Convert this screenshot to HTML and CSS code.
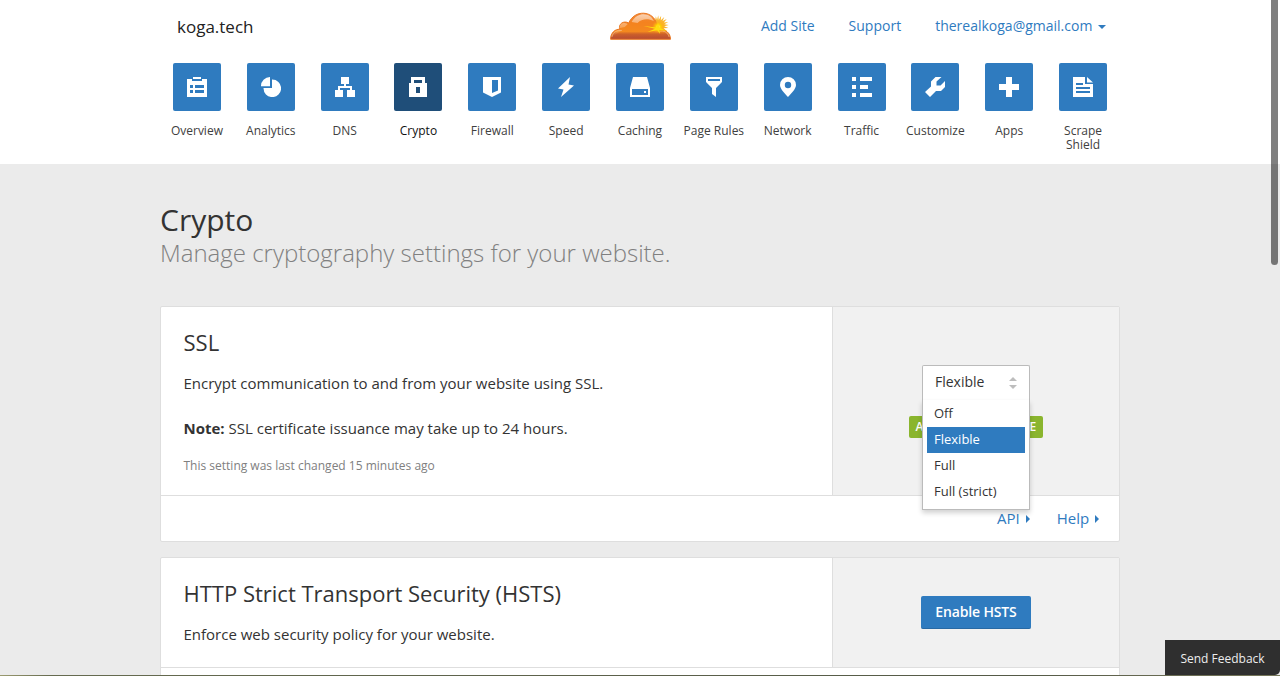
FILE: index.html
```html
<!DOCTYPE html>
<html lang="en">
<head>
<meta charset="utf-8">
<title>Crypto | koga.tech</title>
<link rel="stylesheet" href="styles.css">
</head>
<body>
<div class="window">
  <header class="header">
    <div class="topbar">
      <div class="site">koga.tech</div>
      <svg class="logo" viewBox="0 0 62 29" width="61" height="29">
        <defs>
          <linearGradient id="cloud" x1="0" y1="0" x2="0" y2="1">
            <stop offset="0" stop-color="#f28a3a"/><stop offset=".35" stop-color="#f4821f"/><stop offset=".7" stop-color="#f4891f"/><stop offset=".8" stop-color="#cc602a"/><stop offset="1" stop-color="#b54a33"/>
          </linearGradient>
          <linearGradient id="shine" x1="0" y1="0" x2="0" y2="1">
            <stop offset="0" stop-color="#fff" stop-opacity=".6"/><stop offset="1" stop-color="#fff" stop-opacity="0"/>
          </linearGradient>
          <radialGradient id="glow"><stop offset="0" stop-color="#fff36a"/><stop offset=".4" stop-color="#ffd000"/><stop offset="1" stop-color="#fa9e1c" stop-opacity="0"/></radialGradient>
        </defs>
        <path fill="#fbb52b" d="M46 8l.6-4 1.200 3.800 1.200-4.800.6 4.800 2.400-4.200-.4 4.600 3.600-3.400-1.800 4.200 4.300-2-3 3.500 4.500-.6-4 2.400 4.500.8-4.600 1.200 4.200 1.700-4.800.3 3.500 3H44z"/>
        <path fill="url(#cloud)" stroke="#ea7620" stroke-width="1" d="M.6 27.500C.6 21 5 17 10 17.300C8 12 14 8 19 11C22 4 28 .8 34 1C41 1.200 46 6 47 11L50 18.500C56 16.500 61.500 21 61.500 27.500Z"/>
        <path fill="url(#shine)" d="M22 10C25 4 30 2 34 2C40 2 43 5 44.500 9C38 6 32 7 28 11ZM10 16C9 12 14 9.500 18 12L15 15ZM2 25C3 20 7 18 12 18.500L8 21Z"/>
        <path fill="none" stroke="#f9bd80" stroke-width=".8" d="M2 25C3 20 7 18 12 18.500M50 19.500C55 18 59 21 60 25"/>
        <circle cx="49" cy="15" r="6.500" fill="url(#glow)"/>
        <path fill="#ffdc10" d="M34 14L47 15.500 49 11 50 15.500 58 19 50 18 51 22 48 18.200 38 20 46 16.800Z"/>
      </svg>
      <nav class="account">
        <a>Add Site</a><a>Support</a><a>therealkoga@gmail.com <i class="caret"></i></a>
      </nav>
    </div>
    <nav class="apps">
      <a class="app"><span class="tile"><svg viewBox="0 0 20 20"><path fill-rule="evenodd" d="M0 2h5v2h10V2h5v18H0zM6 0h8v2H6zM3 8v3h3V8zM8 8v3h9V8zM3 13v3h3v-3zM8 13v3h9v-3z"/></svg></span>Overview</a>
      <a class="app"><span class="tile"><svg viewBox="0 0 20 20"><path d="M0 9.200A9 9 0 0 1 9 0V9.200zM11 2.500A8.800 8.800 0 1 1 2.500 11H11z"/></svg></span>Analytics</a>
      <a class="app"><span class="tile"><svg viewBox="0 0 20 20"><path d="M6 0h8v7h-3v2h6v4h3v7h-8v-7h3v-2H5v2h3v7H0v-7h3V9h6V7H6z"/></svg></span>DNS</a>
      <a class="app active"><span class="tile"><svg viewBox="0 0 20 20"><path fill-rule="evenodd" d="M3 0h14v6h2v14H1V6h2zM6 3v3h8V3zM8 10v6h4v-6z"/></svg></span>Crypto</a>
      <a class="app"><span class="tile"><svg viewBox="0 0 20 20"><path fill-rule="evenodd" d="M1 0h18v15.500L10 20l-9-4.500zM10 3v13l6-2.500V3z"/></svg></span>Firewall</a>
      <a class="app"><span class="tile"><svg viewBox="0 0 20 20"><path d="M14 0L2 11.500l5.500 1L5 20 18 8.500l-5.500-1z"/></svg></span>Speed</a>
      <a class="app"><span class="tile"><svg viewBox="0 0 20 20"><path fill-rule="evenodd" d="M3 0h14l3 11v9H0v-9zM2 12v6h16v-6zM14 14h2v2h-2z"/></svg></span>Caching</a>
      <a class="app"><span class="tile"><svg viewBox="0 0 20 20"><path fill-rule="evenodd" d="M2 0h16v5l-6 6v9l-4-3v-6L2 5zM4 2v2h12V2z"/></svg></span>Page Rules</a>
      <a class="app"><span class="tile"><svg viewBox="0 0 20 20"><path fill-rule="evenodd" d="M10 20C7 16.500 2 12 2 8a8 8 0 0 1 16 0c0 4-5 8.500-8 12zM10 4.800a3.200 3.200 0 1 0 0 6.400 3.200 3.200 0 0 0 0-6.400z"/></svg></span>Network</a>
      <a class="app"><span class="tile"><svg viewBox="0 0 20 20"><path d="M0 0h4v4H0zM8 0h12v4H8zM0 8h4v4H0zM8 8h8v4H8zM0 16h4v4H0zM8 16h12v4H8z"/></svg></span>Traffic</a>
      <a class="app"><span class="tile"><svg viewBox="0 0 20 20"><path d="M16.500 0L11.500 4.500v4h4L20 4v6l-4 4h-5l-6 6L0 15l6-5.500V4.500L10.500 0z"/></svg></span>Customize</a>
      <a class="app"><span class="tile"><svg viewBox="0 0 20 20"><path d="M7 0h6v7h7v6h-7v7H7v-7H0V7h7z"/></svg></span>Apps</a>
      <a class="app"><span class="tile"><svg viewBox="0 0 20 20"><path fill-rule="evenodd" d="M0 0h12v7h8v13H0zM14 0l6 5.500h-6zM3 6v2h7V6zM3 10v2h14v-2zM3 14v2h14v-2z"/></svg></span>Scrape<br>Shield</a>
    </nav>
  </header>

  <main class="content">
    <h1>Crypto</h1>
    <p class="lead">Manage cryptography settings for your website.</p>

    <section class="card">
      <div class="card-body ssl">
        <div class="card-main">
          <h2>SSL</h2>
          <p>Encrypt communication to and from your website using SSL.</p>
          <p class="note"><b>Note:</b> SSL certificate issuance may take up to 24 hours.</p>
          <small>This setting was last changed 15 minutes ago</small>
        </div>
        <div class="card-side">
          <div class="select">
            <span>Flexible</span>
            <svg viewBox="0 0 8 12" width="8" height="12"><path d="M4 0l4 4H0zM0 8h8l-4 4z"/></svg>
            <ul class="menu"><li>Off</li><li class="selected">Flexible</li><li>Full</li><li>Full (strict)</li></ul>
          </div>
          <span class="badge">ACTIVE CERTIFICATE</span>
        </div>
      </div>
      <footer class="card-footer"><a>API <i class="arrow"></i></a><a>Help <i class="arrow"></i></a></footer>
    </section>

    <section class="card">
      <div class="card-body hsts">
        <div class="card-main">
          <h2>HTTP Strict Transport Security (HSTS)</h2>
          <p>Enforce web security policy for your website.</p>
        </div>
        <div class="card-side"><button class="button">Enable HSTS</button></div>
      </div>
      <footer class="card-footer"></footer>
    </section>
  </main>

  <div class="feedback">Send Feedback</div>
  <div class="scrollbar"></div>
  <div class="edge"></div>
</div>
</body>
</html>
```
FILE: styles.css
```css
* { box-sizing: border-box; }
body { margin: 0; font-family: "Open Sans", sans-serif; font-size: 15px; line-height: 22.5px; color: #333; }
h1, h2, p, ul { margin: 0; padding: 0; font-weight: 400; }
.window { position: relative; width: 1280px; height: 676px; overflow: hidden; background: #ebebeb; }

.header { height: 164px; background: #fff; }
.topbar { width: 960px; height: 63px; margin: 0 auto; padding: 12px 14px 0 17px; display: grid; grid-template-columns: 433px 61px 1fr; align-items: start; }
.site { font-size: 17px; line-height: 29px; color: #222; }
.logo { display: block; }
.account { display: flex; justify-content: flex-end; gap: 34px; font-size: 14px; line-height: 28px; color: #2f7bbf; }
.caret { display: inline-block; margin-left: 2px; vertical-align: 2px; border: 4px solid transparent; border-top-color: #2f7bbf; border-bottom: 0; }
.apps { width: 960px; margin: 0 auto; display: grid; grid-template-columns: repeat(13, minmax(0, 1fr)); }
.app { display: flex; flex-direction: column; align-items: center; font-size: 12px; line-height: 14px; text-align: center; color: #404040; white-space: nowrap; }
.tile { width: 48px; height: 48px; margin-bottom: 13px; padding: 14px; border-radius: 2px; background: #2f7bbf; }
.tile svg { display: block; width: 20px; height: 20px; fill: #fff; }
.active { color: #111; }
.active .tile { background: #1f4e79; }

.content { width: 960px; margin: 0 auto; padding-top: 37px; }
h1 { font-size: 30px; line-height: 38px; }
.lead { font-size: 24px; line-height: 28px; font-weight: 300; color: #808080; }
.card { margin-top: 39px; border: 1px solid #dedede; border-radius: 2px; background: #fff; }
.card + .card { margin-top: 15px; }
.card-body { display: grid; grid-template-columns: 671px 1fr; border-bottom: 1px solid #dedede; }
.ssl { height: 189px; }
.hsts { height: 110px; }
.card-main { padding: 20px 22.5px 0; }
.card-main h2 { font-size: 22px; line-height: 30px; margin-bottom: 14.5px; }
.note { margin: 22.5px 0 16px; }
.card-main small { display: block; font-size: 12px; line-height: 22px; color: #808080; }
.card-side { display: flex; flex-direction: column; align-items: center; justify-content: center; border-left: 1px solid #dedede; background: #f1f1f1; }
.ssl .card-side { justify-content: flex-start; padding-top: 58px; }
.select { position: relative; width: 108px; height: 35px; display: flex; justify-content: space-between; padding: 0 12px; border: 1px solid #bbb; border-bottom: 0; border-radius: 2px 2px 0 0; background: #fff; font-size: 14px; line-height: 32px; }
.select svg { margin-top: 11px; fill: #bdbdbd; }
.menu { position: absolute; top: 34px; left: -1px; width: 108px; height: 110px; padding: 1px 4px 0; list-style: none; border: 1px solid #bbb; border-top: 0; background: #fff; box-shadow: 0 3px 5px rgba(0, 0, 0, .18); font-size: 13px; line-height: 24px; }
.menu li { height: 26px; padding: 0 7px; }
.menu .selected { background: #2f7bbf; color: #fff; }
.badge { width: 134px; height: 22px; margin-top: 16px; border-radius: 2px; background: #8ab52e; color: #fff; font-size: 12px; line-height: 21px; font-weight: 600; letter-spacing: .35px; white-space: nowrap; display: flex; justify-content: center; }
.card-footer { height: 45px; padding: 0 20px; display: flex; justify-content: flex-end; gap: 27px; line-height: 45px; color: #2f7bbf; }
.arrow { display: inline-block; margin-left: 2px; vertical-align: 1px; border: 4px solid transparent; border-left-color: #2f7bbf; border-right: 0; }
.button { width: 110px; height: 33px; padding: 0 0 2px; border: 0; border-bottom: 1px solid #2869a4; border-radius: 2px; background: #2f7bbf; color: #fff; font: 600 14px "Open Sans", sans-serif; letter-spacing: -.15px; }

.feedback { position: absolute; right: 0; bottom: 1px; width: 115px; height: 35px; border-radius: 0 0 5px; background: #2f2f2f; color: #ededed; font-size: 12px; line-height: 37px; text-align: center; }
.scrollbar { position: absolute; top: -4px; right: 2px; width: 7px; height: 269px; border-radius: 4px; background: rgba(0, 0, 0, .5); }
.edge { position: absolute; left: 0; right: 0; bottom: 0; height: 1px; background: linear-gradient(90deg, #9b9b70, #666b50 4%, #555a48 80%, #77775a); }
```
